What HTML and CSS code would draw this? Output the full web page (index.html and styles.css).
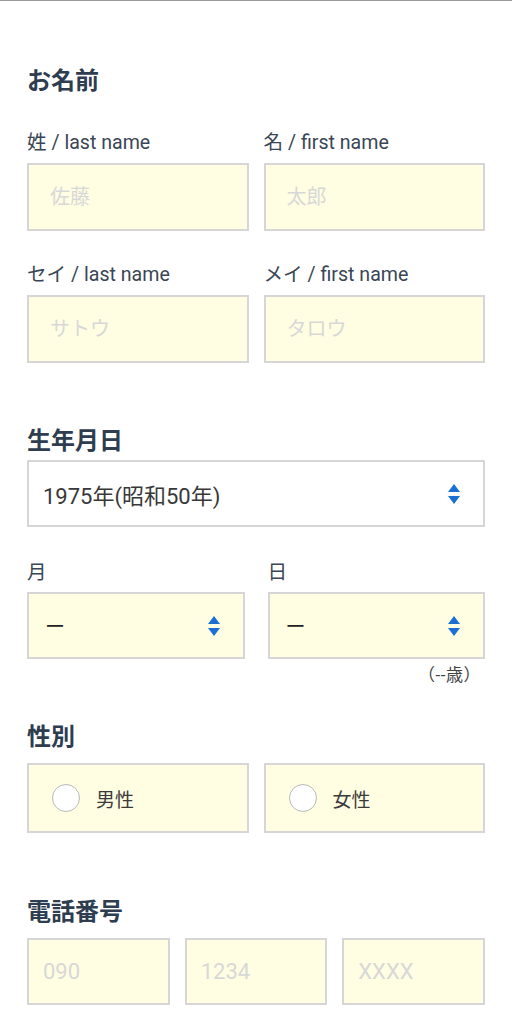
FILE: index.html
```html
<!DOCTYPE html>
<html lang="ja">
<head>
<meta charset="utf-8">
<title>お名前</title>
<link rel="stylesheet" href="styles.css">
</head>
<body>
<div class="page">
  <h2 class="sec-title t-name">お名前</h2>
  <div class="grid2 row-first">
    <div class="field">
      <label class="lbl">姓 / last name</label>
      <input class="box txt" type="text" placeholder="佐藤">
    </div>
    <div class="field">
      <label class="lbl">名 / first name</label>
      <input class="box txt" type="text" placeholder="太郎">
    </div>
  </div>
  <div class="grid2 row-second">
    <div class="field">
      <label class="lbl">セイ / last name</label>
      <input class="box txt" type="text" placeholder="サトウ">
    </div>
    <div class="field">
      <label class="lbl">メイ / first name</label>
      <input class="box txt" type="text" placeholder="タロウ">
    </div>
  </div>

  <h2 class="sec-title t-birth">生年月日</h2>
  <div class="select white">
    <span class="sel-text">1975年(昭和50年)</span>
    <svg class="arrows" viewBox="0 0 12 20" width="12" height="20"><polygon points="6,0 12,8 0,8"/><polygon points="0,12 12,12 6,20"/></svg>
  </div>
  <div class="grid2 date-row">
    <div class="field">
      <label class="lbl lbl-date">月</label>
      <div class="select">
        <span class="sel-text dash">ー</span>
        <svg class="arrows" viewBox="0 0 12 20" width="12" height="20"><polygon points="6,0 12,8 0,8"/><polygon points="0,12 12,12 6,20"/></svg>
      </div>
    </div>
    <div class="field">
      <label class="lbl lbl-date">日</label>
      <div class="select">
        <span class="sel-text dash">ー</span>
        <svg class="arrows" viewBox="0 0 12 20" width="12" height="20"><polygon points="6,0 12,8 0,8"/><polygon points="0,12 12,12 6,20"/></svg>
      </div>
    </div>
  </div>
  <div class="age">（--歳）</div>

  <h2 class="sec-title t-gender">性別</h2>
  <div class="grid2 gender-row">
    <div class="radio-box"><span class="circle"></span><span class="radio-lbl">男性</span></div>
    <div class="radio-box"><span class="circle"></span><span class="radio-lbl">女性</span></div>
  </div>

  <h2 class="sec-title t-phone">電話番号</h2>
  <div class="grid3">
    <input class="box tel" type="tel" placeholder="090">
    <input class="box tel" type="tel" placeholder="1234">
    <input class="box tel" type="tel" placeholder="XXXX">
  </div>
</div>
</body>
</html>
```

FILE: styles.css
```css
html, body {
  margin: 0;
  padding: 0;
  background: #ffffff;
}
body {
  font-family: Roboto, "Noto Sans CJK JP", sans-serif;
  color: #333;
}
.page {
  border-top: 1px solid #9a9a9a;
  padding: 0 27px;
  height: 1023px;
  overflow: hidden;
}
.sec-title {
  margin: 0;
  font-size: 24px;
  line-height: 30px;
  font-weight: 700;
  color: #2e3d4f;
}
.t-name { margin-top: 65px; }
.t-birth { margin-top: 63px; margin-bottom: 4px; }
.t-gender { margin-top: 37px; margin-bottom: 11px; }
.t-phone { margin-top: 64px; margin-bottom: 11px; }

.grid2 {
  display: grid;
  grid-template-columns: 1fr 1fr;
  column-gap: 15px;
}
.grid3 {
  display: grid;
  grid-template-columns: 1fr 1fr 1fr;
  column-gap: 15px;
}
.row-first { margin-top: 35px; }
.row-second { margin-top: 32px; }
.date-row { margin-top: 34px; column-gap: 23px; }

.field {
  display: flex;
  flex-direction: column;
  min-width: 0;
}
.lbl {
  font-size: 19.6px;
  line-height: 24px;
  color: #3a4655;
  margin-bottom: 8px;
}
.lbl-date { margin-bottom: 7px; }

.box {
  box-sizing: border-box;
  width: 100%;
  margin: 0;
  border: 2px solid #d6d6d6;
  background: #fffde2;
  font-family: Roboto, "Noto Sans CJK JP", sans-serif;
  outline: none;
  border-radius: 0;
  -webkit-appearance: none;
  appearance: none;
}
.txt {
  height: 68px;
  padding: 0 0 0 21px;
  font-size: 20px;
}
.tel {
  height: 67px;
  padding: 0 0 0 14px;
  font-size: 22px;
}
.box::placeholder {
  color: #d8d8d8;
  opacity: 1;
}

.select {
  box-sizing: border-box;
  height: 67px;
  border: 2px solid #d6d6d6;
  background: #fffde2;
  display: flex;
  align-items: center;
  justify-content: space-between;
  padding: 0 23px 0 14px;
}
.select.white { background: #ffffff; }
.sel-text {
  font-size: 22px;
  color: #383838;
}
.dash {
  font-size: 20px;
  color: #222;
  padding-left: 2px;
}
.arrows {
  fill: #1a6fd2;
  display: block;
  flex: none;
}

.age {
  margin-top: 6px;
  text-align: right;
  font-size: 17px;
  line-height: 20px;
  color: #444;
  padding-right: 4px;
  letter-spacing: 0.5px;
}

.radio-box {
  box-sizing: border-box;
  height: 70px;
  border: 2px solid #d6d6d6;
  background: #fffde2;
  display: flex;
  align-items: center;
  padding-left: 23px;
}
.circle {
  box-sizing: border-box;
  width: 28px;
  height: 28px;
  border-radius: 50%;
  border: 1.5px solid #b9b9b9;
  background: #fff;
  flex: none;
}
.radio-lbl {
  margin-left: 16px;
  font-size: 19px;
  color: #3a3a3a;
}
```
